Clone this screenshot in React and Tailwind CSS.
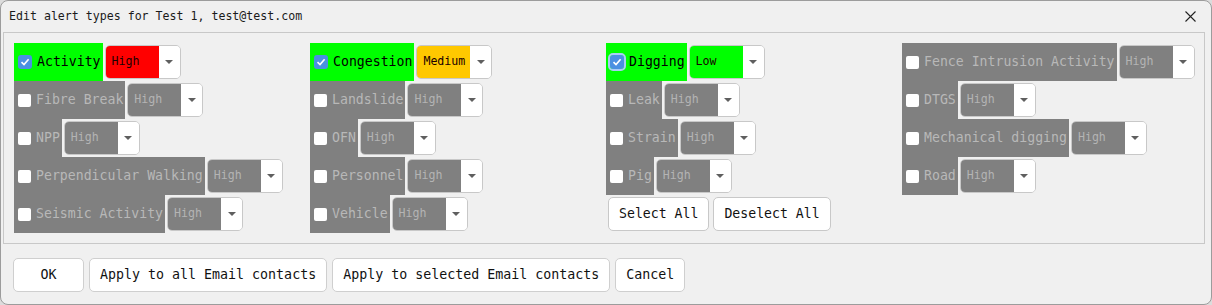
import React from "react";

const MONO = "font-['DejaVu_Sans_Mono','Liberation_Mono',monospace]";

const columns = [
  [
    { name: "Activity", on: true, level: "High", color: "bg-[#ff0000]" },
    { name: "Fibre Break" },
    { name: "NPP" },
    { name: "Perpendicular Walking" },
    { name: "Seismic Activity" },
  ],
  [
    { name: "Congestion", on: true, level: "Medium", color: "bg-[#ffc800]" },
    { name: "Landslide" },
    { name: "OFN" },
    { name: "Personnel" },
    { name: "Vehicle" },
  ],
  [
    { name: "Digging", on: true, level: "Low", color: "bg-[#00ff00]", focus: true },
    { name: "Leak" },
    { name: "Strain" },
    { name: "Pig" },
    { buttons: true },
  ],
  [
    { name: "Fence Intrusion Activity" },
    { name: "DTGS" },
    { name: "Mechanical digging" },
    { name: "Road" },
  ],
];

function Check({ on, focus }) {
  if (!on) return <span className="block w-[13px] h-[13px] rounded-[2px] bg-white shrink-0" />;
  return (
    <span
      className={
        "flex items-center justify-center w-[14px] h-[14px] rounded-[3px] bg-[#4a90e2] shrink-0 " +
        (focus ? "outline outline-2 outline-[#a9cdf5]" : "")
      }
    >
      <svg width="10" height="10" viewBox="0 0 10 10">
        <path d="M1.5 5.2 L4 7.6 L8.6 2.2" fill="none" stroke="white" strokeWidth="1.6" />
      </svg>
    </span>
  );
}

function Combo({ level, color }) {
  const active = !!color;
  return (
    <div className="ml-[2px] flex h-[34px] w-[76px] rounded-[5px] border border-[#c8c8c8] overflow-hidden shrink-0">
      <div
        className={
          "flex-1 flex items-center pl-[6px] text-[11.6px] " +
          (active ? color + " text-[#1a0000]" : "bg-[#808080] text-[#b4b4b4]")
        }
      >
        {level || "High"}
      </div>
      <div className="w-[21px] bg-white flex items-center justify-center">
        <svg width="8" height="4" viewBox="0 0 8 4">
          <path d="M0 0 H8 L4 4 Z" fill="#5f5f5f" />
        </svg>
      </div>
    </div>
  );
}

function Row({ item }) {
  if (item.buttons) {
    return (
      <div className="flex items-center h-[38px] gap-[4px] pl-[2px]">
        <button className="h-[34px] px-[10px] bg-white border border-[#c8c8c8] rounded-[5px] text-[13.2px] text-[#111]">
          Select All
        </button>
        <button className="h-[34px] px-[10px] bg-white border border-[#c8c8c8] rounded-[5px] text-[13.2px] text-[#111]">
          Deselect All
        </button>
      </div>
    );
  }
  return (
    <div className="flex items-center h-[38px]">
      <label
        className={
          "flex items-center h-full pl-[4px] pr-[2px] gap-[5px] text-[13.2px] whitespace-pre " +
          (item.on ? "bg-[#00ff00] text-black" : "bg-[#808080] text-[#b8b8b8]")
        }
      >
        <Check on={item.on} focus={item.focus} />
        {item.name}
      </label>
      <Combo level={item.level} color={item.color} />
    </div>
  );
}

function Btn({ children, className = "" }) {
  return (
    <button
      className={
        "h-[34px] px-[10px] bg-white border border-[#cfcfcf] rounded-[5px] text-[13.3px] text-[#111] " + className
      }
    >
      {children}
    </button>
  );
}

export default function App() {
  return (
    <div className={"w-[1212px] h-[305px] bg-[#dcdcdc] " + MONO}>
      <div className="w-full h-full bg-[#f0f0f0] border border-[#9c9c9c] rounded-[8px] flex flex-col">
        <div className="h-[31px] flex items-center justify-between pl-[8px] pr-[15px]">
          <span className="text-[11.6px] text-[#1a1a1a]">Edit alert types for Test 1, test@test.com</span>
          <svg width="11" height="11" viewBox="0 0 11 11">
            <path d="M0.5 0.5 L10.5 10.5 M10.5 0.5 L0.5 10.5" stroke="#222" strokeWidth="1.1" />
          </svg>
        </div>
        <div className="ml-[2px] w-[1202px] border border-[#c8c8c8] p-[10px]">
          <div className="grid grid-cols-[296px_296px_296px_296px]">
            {columns.map((col, i) => (
              <div key={i} className="flex flex-col">
                {col.map((item, j) => (
                  <Row key={j} item={item} />
                ))}
              </div>
            ))}
          </div>
        </div>
        <div className="flex gap-[5px] mt-[14px] pl-[12px]">
          <Btn className="w-[71px]">OK</Btn>
          <Btn>Apply to all Email contacts</Btn>
          <Btn>Apply to selected Email contacts</Btn>
          <Btn>Cancel</Btn>
        </div>
      </div>
    </div>
  );
}
